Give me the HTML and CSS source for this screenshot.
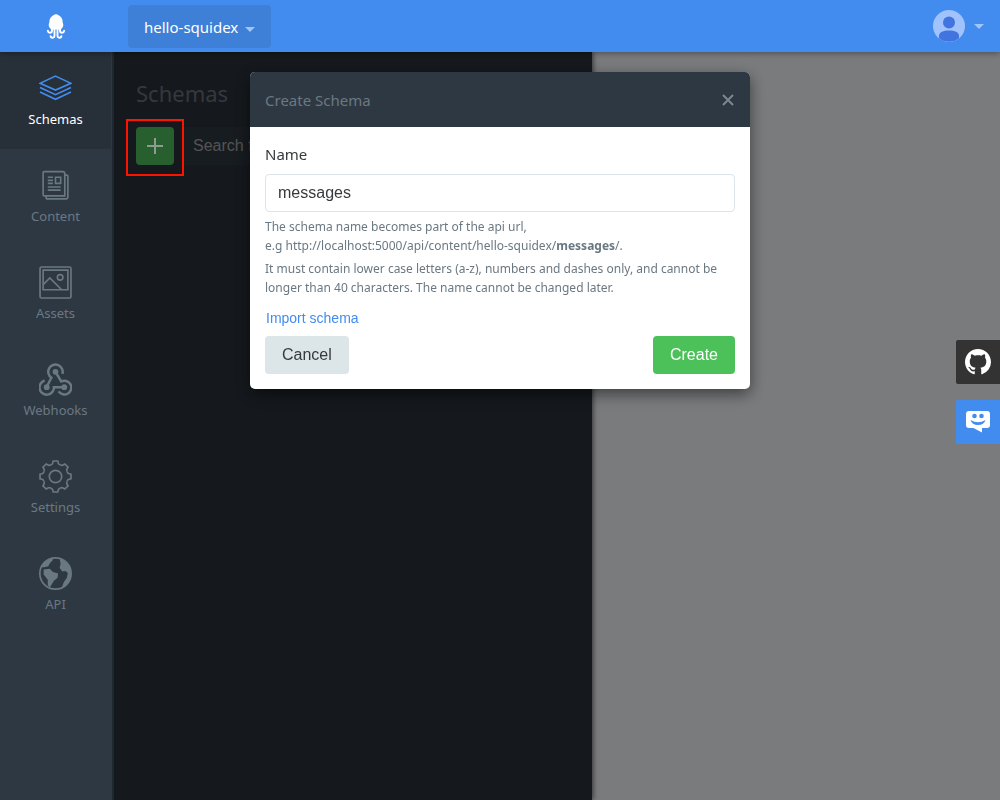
FILE: index.html
```html
<!DOCTYPE html>
<html lang="en">
<head>
<meta charset="utf-8">
<title>Squidex - Schemas</title>
<link rel="stylesheet" href="styles.css">
</head>
<body>
<div class="app">
  <header class="navbar">
    <a class="logo" href="#" aria-label="Squidex">
      <svg width="18" height="25" viewBox="0 0 18 25"><path fill="#fff" d="M9 0C6 1 2.500 3.500 2.500 7c0 1.500-.8 2.500-.8 4 0 2.500 1.800 3 2.300 4.500h10c.5-1.500 2.300-2 2.300-4.500 0-1.500-.8-2.500-.8-4C15.500 3.500 12 1 9 0z"/><g fill="none" stroke="#fff" stroke-width="1.900" stroke-linecap="round"><path d="M5 13v3.500c0 3-4 3-4.100.2M13 13v3.500c0 3 4 3 4.100.2M7.500 14v7.500c0 2.800-3.500 2.800-3.900.8M10.500 14v7.500c0 2.800 3.500 2.800 3.900.8"/></g></svg>
    </a>
    <button class="app-menu" type="button">hello-squidex <span class="caret"></span></button>
    <button class="profile" type="button" aria-label="Profile">
      <svg width="32" height="32" viewBox="0 0 32 32"><circle cx="16" cy="16" r="16" fill="#a0c2fd"/><circle cx="16" cy="12.500" r="6" fill="#4274df"/><path fill="#4274df" d="M6 28.300V26c0-4 4.500-5.500 10-5.500S26 22 26 26v2.300A16 16 0 0 1 6 28.300z"/></svg>
      <span class="caret"></span>
    </button>
  </header>
  <div class="body">
    <nav class="sidebar">
      <a class="item active" href="#">
        <svg viewBox="0 0 32 32"><path d="M16 4 31 11 16 17.500 1 11zM1 15l15 7 15-7M1 19.500l15 7 15-7"/></svg>
        <span>Schemas</span>
      </a>
      <a class="item" href="#">
        <svg viewBox="0 0 32 32"><path d="M5 2.500h18q2 0 2 2v21.500H5q-1 0-1-1V3.500q0-1 1-1zM25 6h2q1 0 1 1v20q0 2-2 2H8q-1 0-1-1v-2M8.500 8h5M8.500 11h5M8.500 14h5M16 8h5v6h-5zM8.500 17.500H21M8.500 20.500H21"/></svg>
        <span>Content</span>
      </a>
      <a class="item" href="#">
        <svg viewBox="0 0 32 32"><rect x="1" y="1" width="30" height="30" rx="1.500"/><path d="M4 4h24v19H4zM4 18l6.500-6.500L22 23"/><circle cx="20.500" cy="11" r="2.700"/></svg>
        <span>Assets</span>
      </a>
      <a class="item" href="#">
        <svg viewBox="0 0 32 32"><g stroke-width="2.400"><path d="M22.700 10.500A7 7 0 1 0 12 14.300L7.500 23M16 8.500l5.500 9.400a6.700 6.700 0 1 1-2.500 9.600M24.500 23.500h-10A7 7 0 1 1 5.500 17"/></g><g class="solid"><circle cx="16" cy="8.500" r="2.800"/><circle cx="7.500" cy="23.500" r="2.800"/><circle cx="24.500" cy="23.500" r="2.800"/></g></svg>
        <span>Webhooks</span>
      </a>
      <a class="item" href="#">
        <svg viewBox="0 0 32 32"><defs><path id="tooth" d="M11.300 4.700Q13 4.200 13.300 3l.5-2h4.400l.5 2q.3 1.200 2 1.700"/></defs><use href="#tooth"/><use href="#tooth" transform="rotate(45 16 16)"/><use href="#tooth" transform="rotate(90 16 16)"/><use href="#tooth" transform="rotate(135 16 16)"/><use href="#tooth" transform="rotate(180 16 16)"/><use href="#tooth" transform="rotate(225 16 16)"/><use href="#tooth" transform="rotate(270 16 16)"/><use href="#tooth" transform="rotate(315 16 16)"/><circle cx="16" cy="16" r="6"/></svg>
        <span>Settings</span>
      </a>
      <a class="item" href="#">
        <svg viewBox="0 0 32 32"><circle cx="16" cy="16" r="15.200"/><path class="solid" d="M2 10C4 5 8 1.500 13 1l.5 2-3 3-1.500 3-4 1zM4.500 12l6-.5 3 3 5 1.500-.5 4-3.500 3-4 6.500-2-2v-5.500L4.500 17zM20 1.700C27 4 31 9 31 16c0 7-4 12-9 14l2-5.500 3-4.500 1-4.500-2.500-2-3 .5-2.500-3.500 1-4z"/></svg>
        <span>API</span>
      </a>
    </nav>
    <main class="content">
      <section class="panel">
        <h1>Schemas</h1>
        <div class="tools">
          <div class="marked"><button class="add" type="button" aria-label="New schema"></button></div>
          <input class="search" type="text" placeholder="Search for schemas..." aria-label="Search for schemas">
        </div>
      </section>
    </main>
  </div>
  <aside class="links">
    <a class="github" href="#" aria-label="GitHub"><svg width="26" height="26" viewBox="0 0 16 16"><path fill="#fff" d="M8 0C3.580 0 0 3.580 0 8c0 3.540 2.290 6.530 5.470 7.590.4.070.55-.17.55-.38 0-.19-.01-.82-.01-1.490-2.010.37-2.530-.49-2.690-.94-.09-.23-.48-.94-.82-1.130-.28-.15-.68-.52-.01-.53.630-.01 1.080.58 1.230.82.720 1.210 1.870.87 2.330.66.070-.52.280-.87.510-1.070-1.780-.2-3.640-.89-3.640-3.950 0-.87.310-1.590.82-2.150-.08-.2-.36-1.020.08-2.120 0 0 .67-.21 2.200.82.640-.18 1.320-.27 2-.27s1.360.09 2 .27c1.530-1.040 2.200-.82 2.200-.82.440 1.100.16 1.920.08 2.120.51.56.82 1.270.82 2.150 0 3.070-1.870 3.750-3.650 3.950.29.25.54.73.54 1.480 0 1.070-.01 1.930-.01 2.200 0 .21.150.46.550.38A8.010 8.010 0 0 0 16 8c0-4.420-3.580-8-8-8z"/></svg></a>
    <a class="forum" href="#" aria-label="Support forum"><svg width="24" height="22" viewBox="0 0 24 22"><path fill="#fff" d="M3 0h18q3 0 3 3v11q0 3-3 3h-5v4.500L7.500 17H3q-3 0-3-3V3q0-3 3-3z"/><g fill="#438cef"><circle cx="8.500" cy="5" r="2.300"/><circle cx="15.500" cy="5" r="2.300"/><path d="M4.500 9q7.500 4.500 15 0-1.500 5-7.500 5t-7.500-5z"/></g></svg></a>
  </aside>
  <div class="backdrop">
    <form class="modal" role="dialog" aria-labelledby="title">
      <div class="modal-head">
        <h2 id="title">Create Schema</h2>
        <button class="close" type="button" aria-label="Close"><svg width="12" height="12" viewBox="0 0 12 12"><path fill="none" stroke="#7b8891" stroke-width="2" d="M1 1l10 10M11 1 1 11"/></svg></button>
      </div>
      <div class="modal-body">
        <label for="name">Name</label>
        <input id="name" class="name" type="text" value="messages">
        <p class="hint">The schema name becomes part of the api url,<br>e.g http://localhost:5000/api/content/hello-squidex/<b>messages</b>/.</p>
        <p class="hint">It must contain lower case letters (a-z), numbers and dashes only, and cannot be longer than 40 characters. The name cannot be changed later.</p>
        <button class="import" type="button">Import schema</button>
        <div class="actions">
          <button class="btn cancel" type="button">Cancel</button>
          <button class="btn create" type="button">Create</button>
        </div>
      </div>
    </form>
  </div>
</div>
</body>
</html>
```
FILE: styles.css
```css
* { box-sizing: border-box; }
body {
  margin: 0;
  font-family: "Segoe UI", "Noto Sans", sans-serif;
  font-size: 15px;
  color: #373a3c;
}
button, input { font-family: "Liberation Sans", Arial, sans-serif; font-size: 16px; }
button { border: 0; padding: 0; background: none; cursor: pointer; }
a { text-decoration: none; }
svg { display: block; }

.app { display: flex; flex-direction: column; min-height: 100vh; }

.navbar {
  position: relative;
  z-index: 3;
  display: flex;
  align-items: center;
  height: 52px;
  padding-right: 16px;
  background: #438cef;
  box-shadow: 0 1px 6px rgba(0, 0, 0, .4);
}
.logo { display: flex; justify-content: center; width: 112px; }
.app-menu {
  display: flex;
  align-items: center;
  gap: 7px;
  height: 43px;
  margin-left: 16px;
  padding: 2px 16px 0;
  border-radius: 4px;
  background: #3e7fd8;
  color: #fff;
  font-family: "Segoe UI", "Noto Sans", sans-serif;
  font-size: 15px;
}
.caret {
  border: 5px solid transparent;
  border-top-color: #a0c5f7;
  border-bottom: 0;
}
.app-menu .caret { margin-top: 4px; }
.profile { display: flex; align-items: center; gap: 9px; margin-left: auto; }

.body { display: flex; flex: 1; }
.sidebar {
  position: relative;
  z-index: 2;
  width: 114px;
  flex: none;
  background: #2e3842;
  border-right: 2px solid #20282f;
}
.item {
  display: flex;
  flex-direction: column;
  align-items: center;
  gap: 4px;
  height: 97px;
  margin-right: 1px;
  padding-top: 20px;
  color: #6a7882;
  font-size: 13px;
  line-height: 20px;
}
.item svg { width: 33px; height: 33px; fill: none; stroke: #6a7882; stroke-width: 1.6; }
.item .solid { fill: #6a7882; stroke: none; }
.item.active { background: #273039; color: #fff; }
.item.active svg { stroke: #438cef; }

.content { flex: 1; background: #f4f6f9; }
.panel {
  width: 478px;
  height: 100%;
  padding: 20px 22px;
  background: #2a323a;
  box-shadow: 1px 0 5px rgba(0, 0, 0, .6);
}
.panel h1 { margin: 0; color: #6a7079; font-size: 22px; font-weight: 400; line-height: 42px; }
.tools { display: flex; align-items: flex-start; margin: 5px 0 0 -10px; }
.marked { position: relative; z-index: 2; padding: 6px 8px 9px; border: 2px solid #fe1300; }
.add {
  display: block;
  width: 38px;
  height: 38px;
  border-radius: 4px;
  background:
    linear-gradient(#8f9a90, #8f9a90) center / 16px 2px no-repeat,
    linear-gradient(#8f9a90, #8f9a90) center / 2px 16px no-repeat,
    #275f2e;
}
.search { flex: 1; min-width: 0; height: 38px; margin: 8px 0 0 -3px; padding: 0 12px; border: 0; background: #2e3842; }
.search::placeholder { color: #a6a6a6; }

.backdrop {
  position: fixed;
  inset: 52px 0 0 0;
  z-index: 1;
  padding-top: 20px;
  background: rgba(0, 0, 0, .5);
}
.modal {
  width: 500px;
  margin: 0 auto;
  border-radius: 5px;
  background: #fff;
  box-shadow: 0 5px 15px rgba(0, 0, 0, .5);
}
.modal-head {
  display: flex;
  align-items: center;
  justify-content: space-between;
  height: 55px;
  padding: 0 16px 0 15px;
  border-radius: 5px 5px 0 0;
  background: #2e3842;
}
.modal-head h2 { margin: 0; color: #6a7882; font-size: 15px; font-weight: 400; }
.modal-body { display: flex; flex-direction: column; padding: 15px; }
.modal-body label { line-height: 24px; }
.name {
  height: 38px;
  margin: 8px 0 5px;
  padding: 0 12px;
  border: 1px solid #dbe4eb;
  border-radius: 4px;
  color: #373a3c;
}
.hint { margin: 0 0 4px; color: #6a7882; font-size: 12px; line-height: 19px; }
.import {
  align-self: flex-start;
  margin: 8px 1px 9px;
  color: #438cef;
  font-size: 14px;
  line-height: 18px;
}
.actions { display: flex; justify-content: space-between; }
.btn { height: 38px; padding: 0 17px; border-radius: 4px; }
.cancel { background: #dce5e8; color: #373a3c; }
.create { background: #4cc159; color: #fff; }

.links {
  position: fixed;
  top: 340px;
  right: 0;
  z-index: 2;
  display: grid;
  gap: 16px;
}
.links a { display: grid; place-items: center; width: 44px; height: 44px; border-radius: 2px 0 0 2px; }
.github { background: #333; }
.forum { background: #438cef; }
```
